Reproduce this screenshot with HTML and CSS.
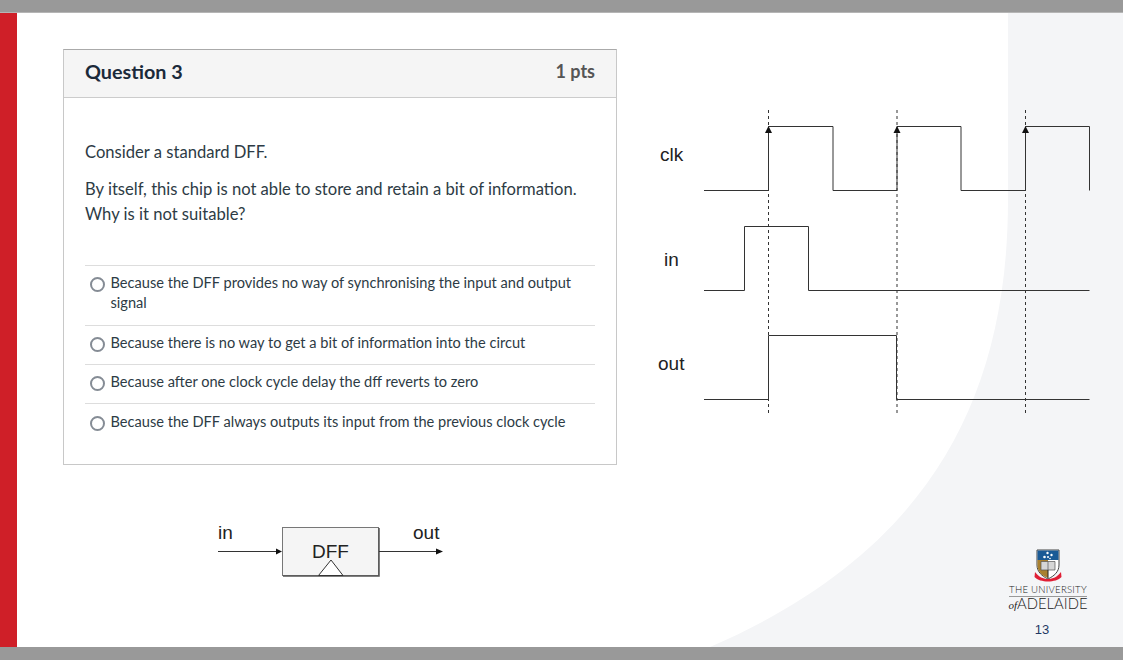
FILE: index.html
```html
<!DOCTYPE html>
<html lang="en">
<head>
  <meta charset="UTF-8">
  <meta name="viewport" content="width=device-width, initial-scale=1.0">
  <title>Question 3</title>
  <link rel="stylesheet" href="styles.css">
</head>
<body>
  <div class="bar bar-top"></div>
  <div class="slide">
    <div class="accent"></div>
    <svg class="swoosh" viewBox="0 13 1123 634" preserveAspectRatio="none">
      <path d="M1008 13 V200 C1008 420 910 560 710 647 H1123 V13 Z"/>
    </svg>

    <div class="left-col">
      <div class="card">
        <div class="card-head">
          <span class="card-title">Question 3</span>
          <span class="card-pts">1 pts</span>
        </div>
        <div class="card-body">
          <p class="q-text">Consider a standard DFF.</p>
          <p class="q-text">By itself, this chip is not able to store and retain a bit of information.<br>Why is it not suitable?</p>
          <ul class="answers">
            <li class="answer"><span class="radio"></span><span>Because the DFF provides no way of synchronising the input and output signal</span></li>
            <li class="answer"><span class="radio"></span><span>Because there is no way to get a bit of information into the circut</span></li>
            <li class="answer"><span class="radio"></span><span>Because after one clock cycle delay the dff reverts to zero</span></li>
            <li class="answer answer-last"><span class="radio"></span><span>Because the DFF always outputs its input from the previous clock cycle</span></li>
          </ul>
        </div>
      </div>

      <svg class="dff" viewBox="210 515 240 70" width="240" height="70">
        <text class="lbl" x="218" y="538.5">in</text>
        <text class="lbl" x="413" y="538.5">out</text>
        <path class="wire" d="M218 551.5 H278"/>
        <path class="head" d="M276 548.5 L282 551.5 L276 554.5 Z"/>
        <rect class="dff-box" x="282.5" y="527.5" width="96" height="48"/>
        <path class="dff-shadow" d="M379 528 V576 H283"/>
        <text class="lbl" x="330.5" y="558" text-anchor="middle">DFF</text>
        <path class="clock" d="M318.5 575.5 L331 560 L343 575.5 Z"/>
        <path class="wire" d="M379 551.5 H438"/>
        <path class="head" d="M436 548.5 L443 551.5 L436 554.5 Z"/>
      </svg>
    </div>

    <div class="right-col">
      <svg class="timing" viewBox="650 100 450 325" width="450" height="325">
        <path class="guide" d="M768.5 110 V416"/>
        <path class="guide guide-soft" d="M897 110 V416"/>
        <path class="guide" d="M1025.5 110 V416"/>

        <text class="lbl" x="660" y="161">clk</text>
        <path class="wave" d="M704 190.5 H768.5 V126.5 H833 V190.5 H897 V126.5 H961 V190.5 H1025.5 V126.5 H1089.5 V190.5"/>
        <path class="head" d="M765 133 L768.5 126 L772 133 Z"/>
        <path class="head" d="M893.5 133 L897 126 L900.5 133 Z"/>
        <path class="head" d="M1022 133 L1025.5 126 L1029 133 Z"/>

        <text class="lbl" x="664" y="265.5">in</text>
        <path class="wave" d="M704 290.5 H744.5 V226.5 H808.5 V290.5 H1089.5"/>

        <text class="lbl" x="658" y="370">out</text>
        <path class="wave" d="M704 399.5 H768.5 V335.5 H896.5 V399.5 H1089.5"/>
      </svg>

      <div class="brand">
        <svg class="crest" viewBox="0 0 28 34" width="28" height="34">
          <path d="M3 1 H25 V16 C25 23 20 27 14 30 C8 27 3 23 3 16 Z" fill="#fff" stroke="#444" stroke-width="1"/>
          <path d="M3.5 1.5 H24.5 V11 H3.5 Z" fill="#1a5a96"/>
          <circle cx="10.5" cy="8" r="1.3" fill="#fff"/>
          <circle cx="13.5" cy="4" r="1.2" fill="#fff"/>
          <circle cx="14" cy="8" r="1" fill="#fff"/>
          <circle cx="17.5" cy="6" r="1.2" fill="#fff"/>
          <circle cx="16" cy="9.5" r=".8" fill="#fff"/>
          <path d="M3.5 11 H14 V29 C8 26.5 3.5 23 3.5 16 Z" fill="#a9802f"/>
          <path d="M7 12.5 H21 V21 H7 Z" fill="#d6d6d6" stroke="#555" stroke-width=".7"/>
          <path d="M14 12.5 V21" stroke="#555" stroke-width=".7"/>
          <path d="M14 21 V29" stroke="#222" stroke-width="1"/>
          <path d="M1 23 C5 28 9 30 14 30 C19 30 23 28 27 23 L27.5 28 C22 34 6 34 .5 28 Z" fill="#e01f35"/>
        </svg>
        <div class="uni-line1">THE UNIVERSITY</div>
        <div class="uni-line2"><span class="uni-of">of</span>ADELAIDE</div>
        <div class="page-num">13</div>
      </div>
    </div>
  </div>
  <div class="bar bar-bottom"></div>
</body>
</html>
```

FILE: styles.css
```css
* {
  box-sizing: border-box;
}
html, body {
  margin: 0;
  height: 100%;
}
body {
  width: 1123px;
  height: 660px;
  overflow: hidden;
  display: flex;
  flex-direction: column;
  background-color: #fff;
  font-family: Lato, Arial, sans-serif;
}
.bar {
  background-color: #999;
}
.bar-top {
  border-bottom: 1px solid #b5b5b5;
  flex: 0 0 13px;
}
.bar-bottom {
  flex: 0 0 13px;
}
.slide {
  flex: 1;
  position: relative;
  display: flex;
  background-color: #fff;
}
.accent {
  flex: 0 0 17px;
  background-color: #cf1f28;
}
.swoosh {
  position: absolute;
  left: 0;
  top: 0;
  width: 100%;
  height: 100%;
}
.swoosh path {
  fill: #f4f5f7;
}

/* left column */
.left-col {
  position: relative;
  flex: 0 0 600px;
  padding: 36px 0 0 46px;
}
.card {
  width: 554px;
  height: 416px;
  border: 1px solid #c8c8c8;
  border-top-color: #aaa;
  background-color: #fff;
  color: #2d3b45;
}
.card-head {
  height: 48px;
  padding: 0 21px 5px;
  display: flex;
  justify-content: space-between;
  align-items: center;
  background-color: #f5f5f5;
  border-bottom: 1px solid #ccc;
}
.card-title {
  font-size: 19.8px;
  font-weight: 700;
  color: #1b2a3a;
}
.card-pts {
  font-size: 18px;
  font-weight: 700;
  color: #555;
}
.card-body {
  padding: 42px 21px 0;
}
.q-text {
  margin: 0 0 12px;
  font-size: 16.6px;
  line-height: 25px;
}
.answers {
  list-style: none;
  margin: 38px 0 0;
  padding: 0;
}
.answer {
  display: flex;
  gap: 5.5px;
  padding: 7px 5px 11px;
  border-top: 1px solid #ddd;
  font-size: 14.6px;
  line-height: 20px;
}
.answer:first-child {
  padding-bottom: 12px;
}
.answer-last {
  padding-top: 8px;
}
.radio {
  flex: 0 0 15px;
  height: 15px;
  margin-top: 4px;
  border: 2px solid #858c95;
  border-radius: 50%;
}

/* drawings */
.dff {
  display: block;
  margin: 50px 0 0 147px;
}
.lbl {
  font-family: "Liberation Sans", Arial, sans-serif;
  font-size: 19px;
  fill: #222;
}
.wire, .wave {
  fill: none;
  stroke: #333;
  stroke-width: 1;
}
.head {
  fill: #111;
}
.dff-box {
  fill: #f5f5f5;
  stroke: #777;
}
.dff-shadow {
  fill: none;
  stroke: #555;
  stroke-width: 1.5;
}
.clock {
  fill: #fff;
  stroke: #333;
}
.guide {
  fill: none;
  stroke: #333;
  stroke-dasharray: 3 3;
}
.guide-soft {
  stroke: #777;
  stroke-width: 1.5;
}

/* right column */
.right-col {
  position: relative;
  flex: 1;
  display: flex;
  flex-direction: column;
  padding: 87px 0 0 33px;
}
.timing {
  display: block;
}
.brand {
  width: 80px;
  margin: 124px 0 0 358px;
  display: flex;
  flex-direction: column;
  align-items: center;
  color: #222;
  font-family: Lato, Arial, sans-serif;
}
.uni-line1 {
  margin-top: 2px;
  padding-bottom: 1px;
  width: 78px;
  border-bottom: 1px solid #999;
  font-size: 9.6px;
  font-weight: 300;
  letter-spacing: .25px;
  line-height: 10px;
  text-align: center;
  white-space: nowrap;
}
.uni-line2 {
  margin-top: -1px;
  font-size: 14.8px;
  font-weight: 300;
  line-height: 14px;
  white-space: nowrap;
}
.uni-of {
  font-family: "Liberation Serif", serif;
  font-size: 11px;
  font-style: italic;
}
.page-num {
  margin: 10px 12px 0 0;
  font-family: "Liberation Sans", Arial, sans-serif;
  font-size: 13px;
  color: #1f3864;
}
```
